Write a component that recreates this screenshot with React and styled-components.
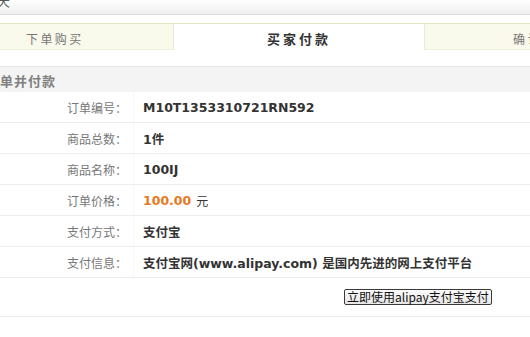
import React from "react";
import styled, { createGlobalStyle } from "styled-components";

const GlobalStyle = createGlobalStyle`
  html, body {
    margin: 0;
    padding: 0;
    background: #fff;
    overflow: hidden;
  }
  body {
    font-family: "Noto Sans CJK SC", "DejaVu Sans", sans-serif;
    font-size: 12px;
    color: #333;
  }
`;

const TopBar = styled.div`
  height: 14px;
  border-bottom: 1px solid #dcdcdc;
  background: linear-gradient(#fff, #efefef);
  overflow: hidden;

  span {
    display: block;
    margin: -7px 0 0 -3px;
    font-size: 13px;
    line-height: 16px;
    color: #555;
  }
`;

const Tabs = styled.div`
  display: flex;
  margin-top: 8px;
  border-top: 1px solid #e4e7c2;
  height: 26px;
`;

const Tab = styled.div`
  flex: ${(p) => (p.$grow ? "1" : "none")};
  width: ${(p) => p.$width || "auto"};
  box-sizing: border-box;
  display: flex;
  align-items: center;
  justify-content: ${(p) => (p.$active ? "center" : "flex-start")};
  padding: 4px 0 0 ${(p) => p.$pad || "0"};
  background: ${(p) => (p.$active ? "#fff" : "#f9faec")};
  border-bottom: 1px solid ${(p) => (p.$active ? "#fff" : "#eef0da")};
  border-left: ${(p) => (p.$left ? "1px solid #e9ecd2" : "none")};
  border-right: ${(p) => (p.$right ? "1px solid #e9ecd2" : "none")};
  font-size: ${(p) => (p.$active ? "13px" : "12px")};
  font-weight: ${(p) => (p.$active ? "bold" : "normal")};
  letter-spacing: ${(p) => (p.$active ? "3px" : "2.4px")};
  color: ${(p) => (p.$active ? "#333" : "#777")};
  white-space: nowrap;
  overflow: hidden;
`;

const Section = styled.div`
  margin-top: 16px;
  border-top: 1px solid #e8e8e8;
`;

const SectionTitle = styled.div`
  height: 25px;
  display: flex;
  align-items: center;
  padding-top: 1px;
  box-sizing: border-box;
  background: #f4f4f4;
  font-size: 13px;
  font-weight: bold;
  letter-spacing: 1px;
  color: #808080;
`;

const Row = styled.div`
  display: flex;
  height: ${(p) => (p.$tall ? "38px" : "30px")};
  border-bottom: 1px solid #ececec;
`;

const Label = styled.div`
  width: 134px;
  flex: none;
  box-sizing: border-box;
  padding-right: 6px;
  display: flex;
  align-items: center;
  justify-content: flex-end;
  border-right: 1px solid ${(p) => (p.$plain ? "transparent" : "#f7f7f7")};
  font-size: 12px;
  color: #777;
`;

const Value = styled.div`
  flex: 1;
  display: flex;
  align-items: center;
  padding-left: ${(p) => p.$pad || "9px"};
  font-family: "DejaVu Sans", "Noto Sans CJK SC", sans-serif;
  font-size: 12.5px;
  font-weight: bold;
  color: #333;
  white-space: nowrap;
`;

const Price = styled.span`
  color: #e8781e;
`;

const Unit = styled.span`
  margin-left: 5px;
  font-family: "Noto Sans CJK SC", sans-serif;
  font-size: 12px;
  font-weight: normal;
  color: #333;
`;

const PayButton = styled.button`
  height: 16px;
  padding: 0 2px;
  border: 1px solid #3a3a3a;
  border-radius: 2px;
  background: linear-gradient(#fafafa, #e6e6e6);
  font-family: "Noto Sans CJK SC", sans-serif;
  font-size: 12px;
  line-height: 14px;
  color: #111;
  cursor: pointer;
`;

const rows = [
  { label: "订单编号：", value: "M10T1353310721RN592" },
  { label: "商品总数：", value: "1件" },
  { label: "商品名称：", value: "100IJ" },
  { label: "订单价格：", price: "100.00" },
  { label: "支付方式：", value: "支付宝" },
  { label: "支付信息：", value: "支付宝网(www.alipay.com) 是国内先进的网上支付平台" },
];

export default function App() {
  return (
    <>
      <GlobalStyle />
      <TopBar>
        <span>天</span>
      </TopBar>
      <Tabs>
        <Tab $width="174px" $pad="26px" $right>
          下单购买
        </Tab>
        <Tab $width="250px" $active>
          买家付款
        </Tab>
        <Tab $grow $pad="88px" $left>
          确认收货
        </Tab>
      </Tabs>
      <Section>
        <SectionTitle>单并付款</SectionTitle>
        {rows.map((r) => (
          <Row key={r.label}>
            <Label>{r.label}</Label>
            <Value>
              {r.price ? (
                <>
                  <Price>{r.price}</Price>
                  <Unit>元</Unit>
                </>
              ) : (
                r.value
              )}
            </Value>
          </Row>
        ))}
        <Row $tall>
          <Label $plain />
          <Value $pad="210px">
            <PayButton type="button">立即使用alipay支付宝支付</PayButton>
          </Value>
        </Row>
      </Section>
    </>
  );
}
